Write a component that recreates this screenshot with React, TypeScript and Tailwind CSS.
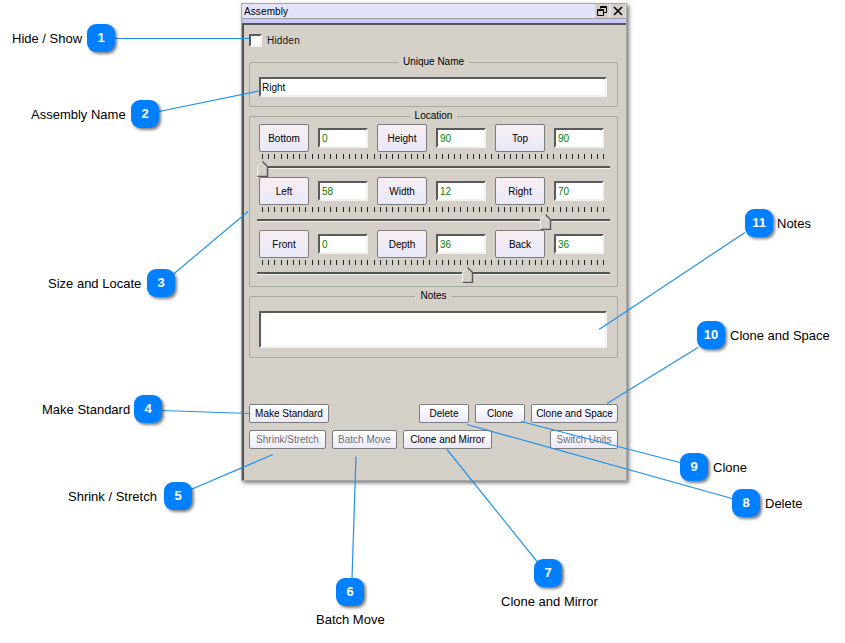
type Callout = {
  n: number;
  x: number;
  y: number;
  label: string;
  labelClass: string;
};

const callouts: Callout[] = [
  { n: 1, x: 87, y: 24, label: "Hide / Show", labelClass: "left-[12px] top-[31px]" },
  { n: 2, x: 131, y: 100, label: "Assembly Name", labelClass: "left-[31px] top-[107px]" },
  { n: 3, x: 147, y: 269, label: "Size and Locate", labelClass: "left-[48px] top-[276px]" },
  { n: 4, x: 134, y: 395, label: "Make Standard", labelClass: "left-[42px] top-[402px]" },
  { n: 5, x: 164, y: 482, label: "Shrink / Stretch", labelClass: "left-[68px] top-[489px]" },
  { n: 6, x: 336, y: 578, label: "Batch Move", labelClass: "left-[316px] top-[612px]" },
  { n: 7, x: 534, y: 559, label: "Clone and Mirror", labelClass: "left-[501px] top-[594px]" },
  { n: 8, x: 732, y: 489, label: "Delete", labelClass: "left-[765px] top-[496px]" },
  { n: 9, x: 680, y: 453, label: "Clone", labelClass: "left-[713px] top-[460px]" },
  { n: 10, x: 697, y: 321, label: "Clone and Space", labelClass: "left-[730px] top-[328px]" },
  { n: 11, x: 745, y: 209, label: "Notes", labelClass: "left-[777px] top-[216px]" },
];

const leaders = [
  [115, 38, 249, 38],
  [159, 111, 261, 90],
  [173, 274, 248, 211],
  [162, 410, 250, 413],
  [191, 489, 273, 454],
  [352, 578, 356, 456],
  [537, 561, 447, 449],
  [732, 498, 467, 424],
  [680, 462, 521, 421],
  [698, 347, 607, 403],
  [745, 232, 599, 329],
];

const rows = [
  { thumb: 0, cells: [["Bottom", "0"], ["Height", "90"], ["Top", "90"]] },
  { thumb: 283, cells: [["Left", "58"], ["Width", "12"], ["Right", "70"]] },
  { thumb: 205, cells: [["Front", "0"], ["Depth", "36"], ["Back", "36"]] },
];

const bevel =
  "border-2 border-t-[#5a5a5a] border-l-[#5a5a5a] border-r-[#f4f2ee] border-b-[#f4f2ee] bg-white";

const Ticks = () => (
  <svg width="346" height="5" className="block ml-[12px]">
    {Array.from({ length: 56 }, (_, i) => (
      <rect key={i} x={Math.round(i * 6.2)} y="0" width="1" height="5" fill="#222" />
    ))}
  </svg>
);

const Thumb = ({ left }: { left: number }) => (
  <svg
    width="12"
    height="16"
    className="absolute top-[-7px]"
    style={{ left }}
  >
    <path d="M0.5 5.5 L5.5 0.5 L10.5 5.5 V15.5 H0.5 Z" fill="#d4d0c8" stroke="#f4f2ee" />
    <path d="M5.5 0.5 L10.5 5.5 V15.5 H0.5" fill="none" stroke="#555" strokeWidth="1.4" />
  </svg>
);

const LocationRow = ({ thumb, cells }: { thumb: number; cells: string[][] }) => (
  <div className="h-[53px]">
    <div className="flex h-[28px] items-center gap-[9px] pl-[9px]">
      {cells.map(([name, value]) => (
        <div key={name} className="flex items-center gap-[9px]">
          <button className="h-[28px] w-[50px] rounded-[2px] border border-[#7c7c7c] bg-gradient-to-b from-[#f9eef3] to-[#e8e8f8] pt-[1px] text-black">
            {name}
          </button>
          <div className={`${bevel} flex h-[20px] w-[50px] items-center pl-[2px] pt-[1px] text-[#008000]`}>
            {value}
          </div>
        </div>
      ))}
    </div>
    <div className="pt-[2px]">
      <Ticks />
      <div className="relative ml-[7px] mt-[7px] h-[3px] w-[353px] border-t-2 border-[#555] border-b border-b-[#f4f2ee]">
        <Thumb left={thumb} />
      </div>
    </div>
  </div>
);

const ActionButton = ({
  label,
  width,
  disabled,
}: {
  label: string;
  width: string;
  disabled?: boolean;
}) => (
  <button
    className={`h-[19px] ${width} rounded-[2px] border border-[#7c7c7c] bg-gradient-to-b from-white to-[#ece9f8] ${
      disabled ? "text-[#707070]" : "text-black"
    }`}
  >
    {label}
  </button>
);

export default function App() {
  return (
    <div className="relative h-[643px] w-[845px] overflow-hidden bg-white font-['Liberation_Sans',sans-serif]">
      {/* the dialog */}
      <div className="absolute left-[241px] top-[3px] h-[478px] w-[386px] border border-[#a8a8a8] bg-[#d4d0c8] font-['Liberation_Sans',sans-serif] text-[10px] leading-[12px] text-black shadow-[2px_2px_4px_rgba(0,0,0,0.55)]">
        <div className="flex h-[15px] items-center justify-between border-b border-[#a0a0a0] bg-[#e4e4f8] pl-[2px]">
          <span className="pt-[1px] tracking-[0.1px]">Assembly</span>
          <div className="flex h-[14px] gap-[2px] pr-[1px]">
            <div className="flex w-[14px] items-center justify-center bg-[#d4d0c8]">
              <svg width="10" height="10" viewBox="0 0 10 10">
                <path d="M3.5 2.5V0.5H9.5V6.5H6.5M0.5 3.5H6.5V9.5H0.5Z M3.5 1.5H9.5 M0.5 4.5H6.5" fill="none" stroke="#000" />
              </svg>
            </div>
            <div className="flex w-[14px] items-center justify-center bg-[#d4d0c8]">
              <svg width="10" height="10" viewBox="0 0 10 10">
                <path d="M1 1L9 9M9 1L1 9" fill="none" stroke="#000" strokeWidth="1.6" />
              </svg>
            </div>
          </div>
        </div>
        <div className="h-[4px] bg-[#c8c8f8]" />

        <div className="h-[457px] border-l-2 border-t-2 border-[#555] pl-[5px] pr-[8px]">
          <label className="mt-[8px] flex h-[14px] items-center gap-[5px]">
            <span className={`${bevel} block h-[13px] w-[13px]`} />
            <span className="pt-[1px] tracking-[0.2px] text-[#111]">Hidden</span>
          </label>

          <fieldset className="mt-[9px] h-[51px] w-[369px] rounded-[2px] border border-[#a8a8a0]">
            <legend className="mx-auto px-[5px] text-center leading-[12px]">Unique Name</legend>
            <div className={`${bevel} ml-[9px] mt-[9px] flex h-[20px] w-[348px] items-center pl-[1px] pt-[1px]`}>
              Right
            </div>
          </fieldset>

          <fieldset className="mt-[3px] h-[177px] w-[369px] rounded-[2px] border border-[#a8a8a0]">
            <legend className="mx-auto px-[5px] text-center leading-[12px]">Location</legend>
            <div className="pt-[2px]">
              {rows.map((row) => (
                <LocationRow key={row.cells[0][0]} thumb={row.thumb} cells={row.cells} />
              ))}
            </div>
          </fieldset>

          <fieldset className="mt-[3px] h-[68px] w-[369px] rounded-[2px] border border-[#a8a8a0]">
            <legend className="mx-auto px-[5px] text-center leading-[12px]">Notes</legend>
            <div className={`${bevel} ml-[9px] mt-[9px] h-[37px] w-[348px]`} />
          </fieldset>

          <div className="mt-[46px] flex w-[369px] justify-between">
            <ActionButton label="Make Standard" width="w-[80px]" />
            <div className="flex gap-[6px]">
              <ActionButton label="Delete" width="w-[50px]" />
              <ActionButton label="Clone" width="w-[50px]" />
              <ActionButton label="Clone and Space" width="w-[87px]" />
            </div>
          </div>
          <div className="mt-[7px] flex w-[369px] justify-between">
            <div className="flex gap-[6px]">
              <ActionButton label="Shrink/Stretch" width="w-[77px]" disabled />
              <ActionButton label="Batch Move" width="w-[65px]" disabled />
              <ActionButton label="Clone and Mirror" width="w-[89px]" />
            </div>
            <ActionButton label="Switch Units" width="w-[68px]" disabled />
          </div>
        </div>
      </div>

      {/* leader lines */}
      <svg width="845" height="643" className="pointer-events-none absolute left-0 top-0">
        {leaders.map(([x1, y1, x2, y2], i) => (
          <line key={i} x1={x1} y1={y1 + 0.5} x2={x2} y2={y2 + 0.5} stroke="#2090f0" strokeWidth="1.2" />
        ))}
      </svg>

      {/* numbered callouts */}
      {callouts.map((c) => (
        <div key={c.n}>
          <div
            className="absolute flex h-[28px] w-[28px] items-center justify-center rounded-[9px] bg-[#0080ff] text-[13px] font-bold text-white shadow-[2px_2px_3px_rgba(0,0,0,0.5)]"
            style={{ left: c.x, top: c.y }}
          >
            {c.n}
          </div>
          <span className={`absolute whitespace-nowrap text-[13px] leading-[16px] text-black ${c.labelClass}`}>
            {c.label}
          </span>
        </div>
      ))}
    </div>
  );
}
